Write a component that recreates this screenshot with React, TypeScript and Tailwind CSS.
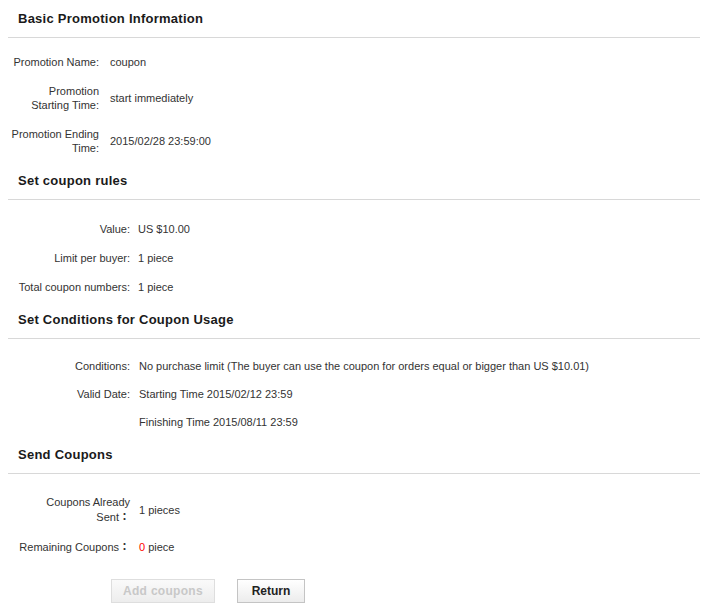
import React from 'react';

type Row = {
  label: React.ReactNode;
  value: React.ReactNode;
  h: string;
};

const SectionHeader = ({ title }: { title: string }) => (
  <div className="ml-[8px] w-[692px] h-[38px] border-b border-[#d8d8d8] pl-[10px] pt-[11px]">
    <h3 className="text-[13px] leading-[16px] font-bold tracking-[0.25px] text-[#1a1a1a]">{title}</h3>
  </div>
);

const InfoRows = ({ rows, labelW, gap, pt }: { rows: Row[]; labelW: string; gap: string; pt: string }) => (
  <div className={`ml-[8px] ${pt}`}>
    {rows.map((row, i) => (
      <div key={i} className={`flex items-center ${row.h}`}>
        <div className={`${labelW} ${gap} shrink-0 text-right leading-[14px]`}>{row.label}</div>
        <div className="leading-[14px]">{row.value}</div>
      </div>
    ))}
  </div>
);

// full-width colon, centred in its box as the original page shows it
const WideColon = () => (
  <span className="font-['Noto_Sans_CJK_JP'] font-bold">：</span>
);

export default function App() {
  const basicRows: Row[] = [
    { label: 'Promotion Name:', value: 'coupon', h: 'h-[28px]' },
    {
      label: (
        <>
          Promotion
          <br />
          Starting Time:
        </>
      ),
      value: 'start immediately',
      h: 'h-[43px]',
    },
    {
      label: (
        <>
          Promotion Ending
          <br />
          Time:
        </>
      ),
      value: '2015/02/28 23:59:00',
      h: 'h-[43px]',
    },
  ];

  const ruleRows: Row[] = [
    { label: 'Value:', value: 'US $10.00', h: 'h-[29px]' },
    { label: 'Limit per buyer:', value: '1 piece', h: 'h-[29px]' },
    { label: 'Total coupon numbers:', value: '1 piece', h: 'h-[29px]' },
  ];

  const conditionRows: Row[] = [
    {
      label: 'Conditions:',
      value: 'No purchase limit (The buyer can use the coupon for orders equal or bigger than US $10.01)',
      h: 'h-[28px]',
    },
    { label: 'Valid Date:', value: 'Starting Time 2015/02/12 23:59', h: 'h-[28px]' },
    { label: '', value: 'Finishing Time 2015/08/11 23:59', h: 'h-[28px]' },
  ];

  const sendRows: Row[] = [
    {
      label: (
        <>
          Coupons Already
          <br />
          Sent
          <WideColon />
        </>
      ),
      value: '1 pieces',
      h: 'h-[45px]',
    },
    {
      label: (
        <>
          Remaining Coupons
          <WideColon />
        </>
      ),
      value: (
        <>
          <span className="text-[#ff0000]">0</span> piece
        </>
      ),
      h: 'h-[29px]',
    },
  ];

  return (
    <div
      className="w-[718px] h-[610px] bg-white text-[11px] text-[#333]"
      style={{ fontFamily: '"Liberation Sans", Arial, "Noto Sans CJK JP", sans-serif' }}
    >
      {/* Basic info */}
      <SectionHeader title="Basic Promotion Information" />
      <InfoRows rows={basicRows} labelW="w-[91px]" gap="mr-[11px]" pt="pt-[10px]" />

      {/* Coupon rules */}
      <SectionHeader title="Set coupon rules" />
      <InfoRows rows={ruleRows} labelW="w-[122px]" gap="mr-[8px]" pt="pt-[14px]" />

      {/* Usage conditions */}
      <SectionHeader title="Set Conditions for Coupon Usage" />
      <InfoRows rows={conditionRows} labelW="w-[122px]" gap="mr-[9px]" pt="pt-[13px]" />

      {/* Send coupons */}
      <SectionHeader title="Send Coupons" />
      <InfoRows rows={sendRows} labelW="w-[122px]" gap="mr-[9px]" pt="pt-[13px]" />

      <div className="flex gap-[22px] pl-[111px] mt-[18px]">
        <button
          disabled
          className="w-[104px] h-[24px] border border-[#dedede] bg-gradient-to-b from-[#fafafa] to-[#ededed] text-[12px] font-bold text-[#c8c8c8] tracking-[0.3px]"
        >
          Add coupons
        </button>
        <button className="w-[68px] h-[24px] border border-[#c4c4c4] bg-gradient-to-b from-white to-[#ececec] text-[12px] font-bold text-[#222]">
          Return
        </button>
      </div>
    </div>
  );
}
